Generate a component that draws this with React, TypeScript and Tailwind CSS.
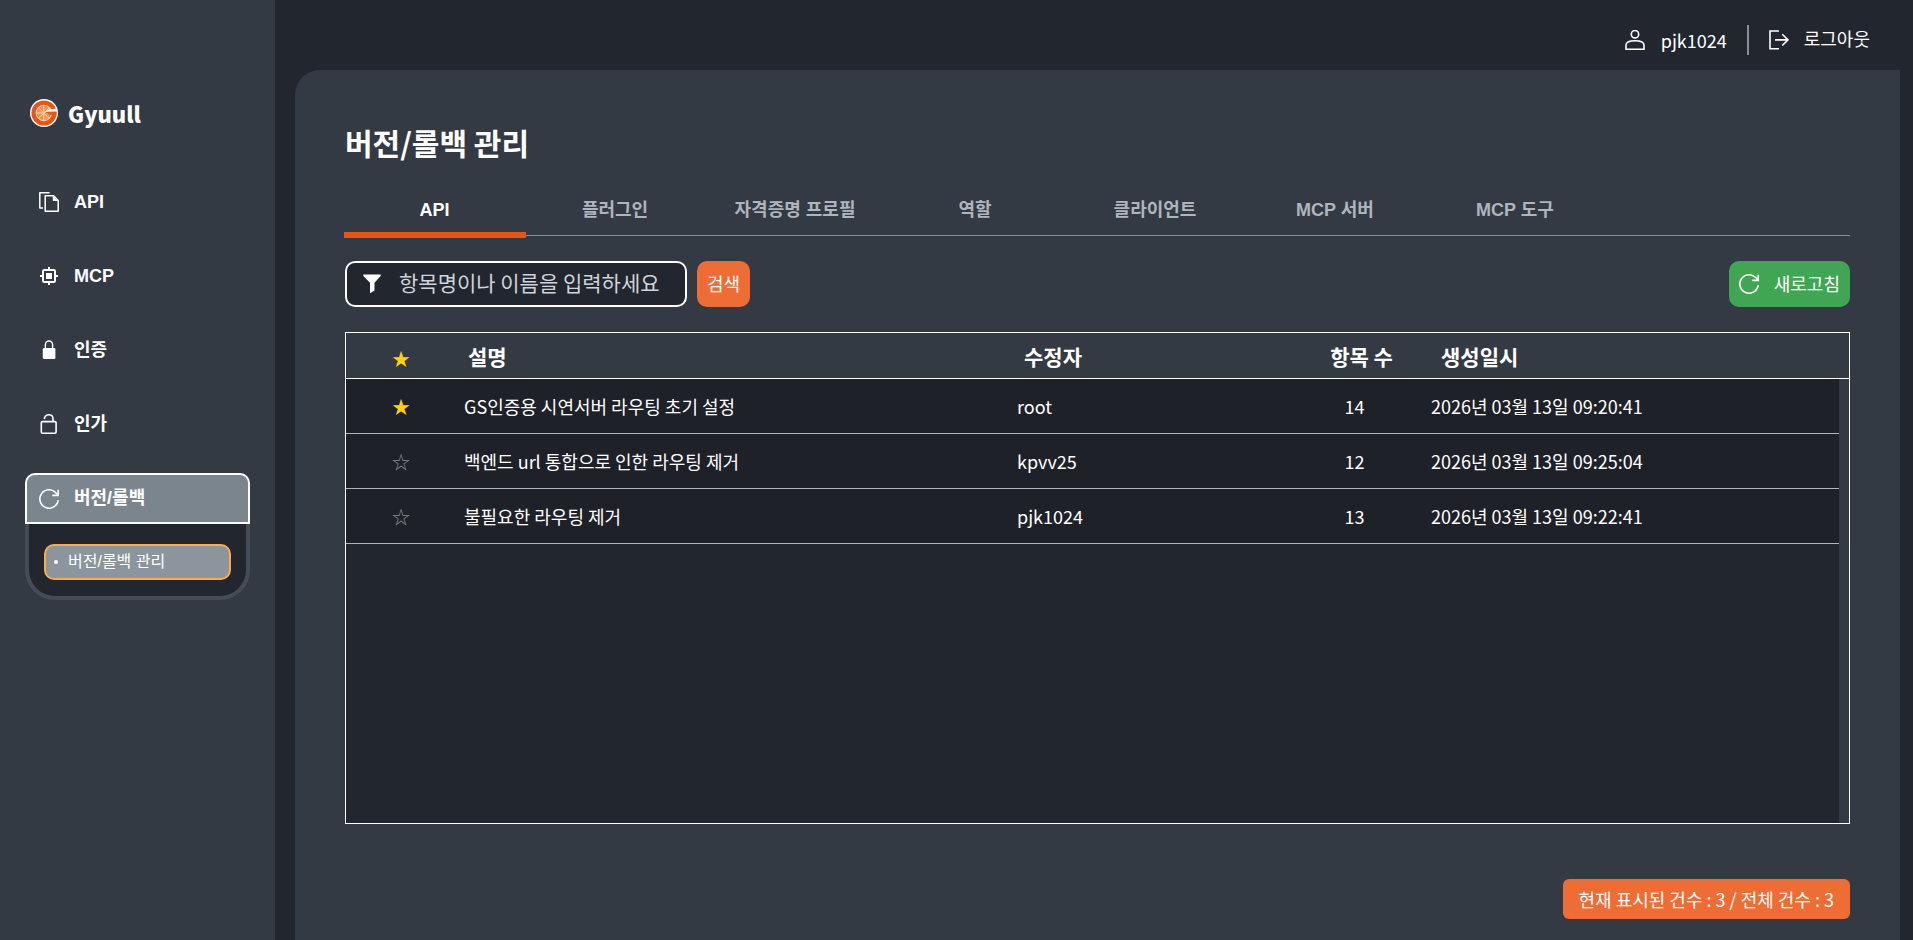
import type { ReactNode, SVGProps } from 'react'

const SANS = "font-['Liberation_Sans','Noto_Sans_CJK_KR',sans-serif]"

function RefreshIcon() {
  return (
    <svg width="20" height="20" viewBox="0 0 20 20" fill="none" stroke="currentColor" strokeWidth="1.6" aria-hidden="true">
      <path d="M19.2 11.2A9.2 9.2 0 1 1 16.9 3.8L19 6.2" />
      <path d="M19.2 0.8V6.4H13.3" />
    </svg>
  )
}

function CopyIcon() {
  return (
    <svg width="20" height="20" viewBox="0 0 20 20" fill="none" stroke="currentColor" strokeWidth="1.5" strokeLinejoin="round" aria-hidden="true">
      <path d="M4 16H0.8V0.8H10.5" />
      <path d="M6.2 3.7H14.6L19.2 8.4V19.2H6.2Z" />
      <path d="M13.8 3.7L19.2 8.9H13.8Z" fill="currentColor" stroke="none" />
    </svg>
  )
}

function ChipIcon() {
  return (
    <svg width="20" height="20" viewBox="0 0 20 20" fill="none" stroke="currentColor" strokeWidth="2" aria-hidden="true">
      <rect x="4" y="4" width="12" height="12" rx="1.2" />
      <path d="M10 1V4M10 16V19M1 10H4M16 10H19" />
      <rect x="7" y="7" width="6" height="6" fill="currentColor" stroke="none" />
    </svg>
  )
}

function LockIcon() {
  return (
    <svg width="20" height="20" viewBox="0 0 20 20" fill="none" stroke="currentColor" strokeWidth="1.4" aria-hidden="true">
      <path d="M6.4 9V4.6A3.6 3.6 0 0 1 13.6 4.6V9" />
      <rect x="3.8" y="8" width="12.6" height="11" rx="1.2" fill="currentColor" stroke="none" />
    </svg>
  )
}

function UnlockIcon() {
  return (
    <svg width="20" height="20" viewBox="0 0 20 20" fill="none" stroke="currentColor" strokeWidth="1.6" aria-hidden="true">
      <path d="M5.3 5.2C6 -0.8 14 -0.5 14 5V7.5" />
      <rect x="2.3" y="7.6" width="14.8" height="11.6" rx="1.2" />
    </svg>
  )
}

function UserIcon() {
  return (
    <svg width="20" height="20" viewBox="0 0 20 20" fill="none" stroke="currentColor" strokeWidth="1.6" aria-hidden="true">
      <circle cx="10" cy="4.2" r="3.7" />
      <path d="M1 19.2V15.2C1 12.4 5 10.8 10 10.8S19 12.4 19 15.2V19.2Z" />
    </svg>
  )
}

function LogoutIcon() {
  return (
    <svg width="20" height="20" viewBox="0 0 20 20" fill="none" stroke="currentColor" strokeWidth="1.6" aria-hidden="true">
      <path d="M10 1H1V18.8H10" />
      <path d="M6 9.9H19M13.3 4.3L19 9.9L13.3 15.5" />
    </svg>
  )
}

function FilterIcon() {
  return (
    <svg width="18" height="20" viewBox="0 0 18 20" fill="currentColor" aria-hidden="true">
      <path d="M0.3 0.5H17.7V2L11.5 8.8V16.5L7 19.3V8.8L0.3 2Z" />
    </svg>
  )
}

function Logo(props: SVGProps<SVGSVGElement>) {
  return (
    <svg width="28" height="28" viewBox="0 0 28 28" aria-hidden="true" {...props}>
      <circle cx="14" cy="14" r="14" fill="#fff" />
      <circle cx="14" cy="14" r="12.6" fill="#ea5414" />
      <circle cx="13.8" cy="14" r="8.2" fill="#fbd9bd" />
      <circle cx="13.8" cy="14" r="7.2" fill="#f58d4b" />
      <path d="M13.8 6.5V21.5M6 14H14M8.6 8.8L19 19.2M8.6 19.2L19 8.8" stroke="#fbd9bd" strokeWidth="1" />
      <path d="M14 14L20 9.2L21.5 10.2L26.5 9.6V12.6H18Z" fill="#fff" />
      <path d="M15.5 12.9H26.5V16H20.5Z" fill="#ea5414" />
    </svg>
  )
}

function NavItem({ icon, label }: { icon: ReactNode; label: string }) {
  return (
    <li>
      <a href="#" className="flex h-[50px] items-center gap-[15px] pl-[14px]">
        {icon}
        <span>{label}</span>
      </a>
    </li>
  )
}

const tabs = ['API', '플러그인', '자격증명 프로필', '역할', '클라이언트', 'MCP 서버', 'MCP 도구']

const rows = [
  { starred: true, description: 'GS인증용 시연서버 라우팅 초기 설정', editor: 'root', count: 14, created: '2026년 03월 13일 09:20:41' },
  { starred: false, description: '백엔드 url 통합으로 인한 라우팅 제거', editor: 'kpvv25', count: 12, created: '2026년 03월 13일 09:25:04' },
  { starred: false, description: '불필요한 라우팅 제거', editor: 'pjk1024', count: 13, created: '2026년 03월 13일 09:22:41' },
]

export default function App() {
  return (
    <div className="flex min-h-screen bg-[#22262e] font-['Noto_Sans_CJK_KR',sans-serif] text-white">
      <aside className="w-[275px] shrink-0 bg-[#343a44] px-[25px] pt-[98px]">
        <a href="#" className="flex h-[30px] items-center gap-[10px] pl-[5px]">
          <Logo />
          <span className="pb-px text-[22px] font-black leading-[30px]">Gyuull</span>
        </a>
        <nav className={`mt-[49px] text-[18px] font-bold ${SANS}`}>
          <ul className="flex flex-col gap-6">
            <NavItem icon={<CopyIcon />} label="API" />
            <NavItem icon={<ChipIcon />} label="MCP" />
            <NavItem icon={<LockIcon />} label="인증" />
            <NavItem icon={<UnlockIcon />} label="인가" />
            <li>
              <a href="#" className="flex h-[51px] items-center gap-[15px] rounded-t-[10px] border-2 border-white bg-[#7b858e] pl-[12px]">
                <RefreshIcon />
                <span>버전/롤백</span>
              </a>
              <div className="rounded-b-[30px] border-4 border-t-0 border-[#454c58] bg-[#22262e] px-[15px] pt-5 pb-4">
                <a
                  href="#"
                  className="flex h-9 items-center gap-[10px] rounded-[10px] border-2 border-[#ffab44] bg-[#8c949e] pl-2 text-[16px] font-normal leading-none"
                >
                  <span className="size-1 rounded-full bg-white" />
                  버전/롤백 관리
                </a>
              </div>
            </li>
          </ul>
        </nav>
      </aside>

      <div className="flex min-w-0 flex-1 flex-col pr-[13px] pl-5">
        <header className="flex h-[70px] items-center justify-end pt-[10px] pr-[30px] text-[18px]">
          <a href="#" className="flex items-center gap-4">
            <UserIcon />
            <span>pjk1024</span>
          </a>
          <span className="mx-5 h-[30px] w-[2px] bg-[#868e96]" />
          <button type="button" className="flex items-center gap-[15px]">
            <LogoutIcon />
            <span className="pb-[3px]">로그아웃</span>
          </button>
        </header>

        <main className="flex flex-1 flex-col rounded-tl-[25px] bg-[#343a44] px-[50px] pt-12 pb-[21px]">
          <h1 className="text-[30px] font-bold leading-[48px]">버전/롤백 관리</h1>

          <div role="tablist" className={`-ml-px mt-5 flex h-[50px] border-b border-[#868e96] text-[18px] font-bold ${SANS}`}>
            {tabs.map((tab, i) => (
              <button
                key={tab}
                type="button"
                role="tab"
                aria-selected={i === 0}
                className={
                  i === 0
                    ? 'relative w-[181px] after:absolute after:left-0 after:-right-px after:-bottom-[3px] after:h-[6px] after:bg-[#ea5414]'
                    : 'w-[180px] text-[#adb5bd]'
                }
              >
                {tab}
              </button>
            ))}
          </div>

          <div className="mt-[25px] flex h-[46px] gap-[10px]">
            <label className="flex w-[342px] items-center gap-[18px] rounded-[10px] border-2 border-white bg-[#22262e] pr-2 pl-4">
              <FilterIcon />
              <input
                type="text"
                aria-label="검색어"
                placeholder="항목명이나 이름을 입력하세요"
                className="min-w-0 flex-1 bg-transparent pb-[2px] text-[21px] outline-none placeholder:text-[#ced4da]"
              />
            </label>
            <button type="button" className="w-[53px] rounded-[10px] bg-[#ed6d35] pb-[2px] text-[18px]">
              검색
            </button>
            <button type="button" className="ml-auto flex items-center gap-[15px] rounded-[10px] bg-[#41a654] px-[10px] text-[18px]">
              <RefreshIcon />
              <span className="pb-[2px]">새로고침</span>
            </button>
          </div>

          <div className="mt-[25px] flex h-[492px] border border-white">
            <div className="min-w-0 flex-1 bg-[#22262e]">
              <table className="w-full table-fixed border-separate border-spacing-0">
                <colgroup>
                  <col className="w-[110px]" />
                  <col />
                  <col className="w-[277px]" />
                  <col className="w-[137px]" />
                  <col className="w-[416px]" />
                </colgroup>
                <thead>
                  <tr className="h-[46px] bg-[#343a44] text-left text-[21px] leading-7 *:border-b *:border-white">
                    <th className="pt-1 text-center text-[18px] font-normal text-[#ffd400]">★</th>
                    <th className="pl-3">설명</th>
                    <th className="pl-[15px]">수정자</th>
                    <th className="pl-[14px] text-center">항목 수</th>
                    <th className="pl-[18px]">생성일시</th>
                  </tr>
                </thead>
                <tbody>
                  {rows.map((row) => (
                    <tr key={row.editor} className="h-[55px] bg-[#1f2128] text-[18px] *:border-b *:border-[#adb5bd]">
                      <td className={row.starred ? 'text-center text-[#ffd400]' : 'text-center text-[#868e96]'}>{row.starred ? '★' : '☆'}</td>
                      <td className="pl-2">{row.description}</td>
                      <td className="pl-2">{row.editor}</td>
                      <td className="text-center">{row.count}</td>
                      <td className="pl-2">{row.created}</td>
                    </tr>
                  ))}
                </tbody>
              </table>
            </div>
            <div className="w-[10px]">
              <div className="h-[46px] border-b border-white" />
            </div>
          </div>

          <div className="mt-auto self-end rounded-[6px] bg-[#ed6d35] px-4 py-[6px] text-[18px] leading-7">현재 표시된 건수 : 3 / 전체 건수 : 3</div>
        </main>
      </div>
    </div>
  )
}
